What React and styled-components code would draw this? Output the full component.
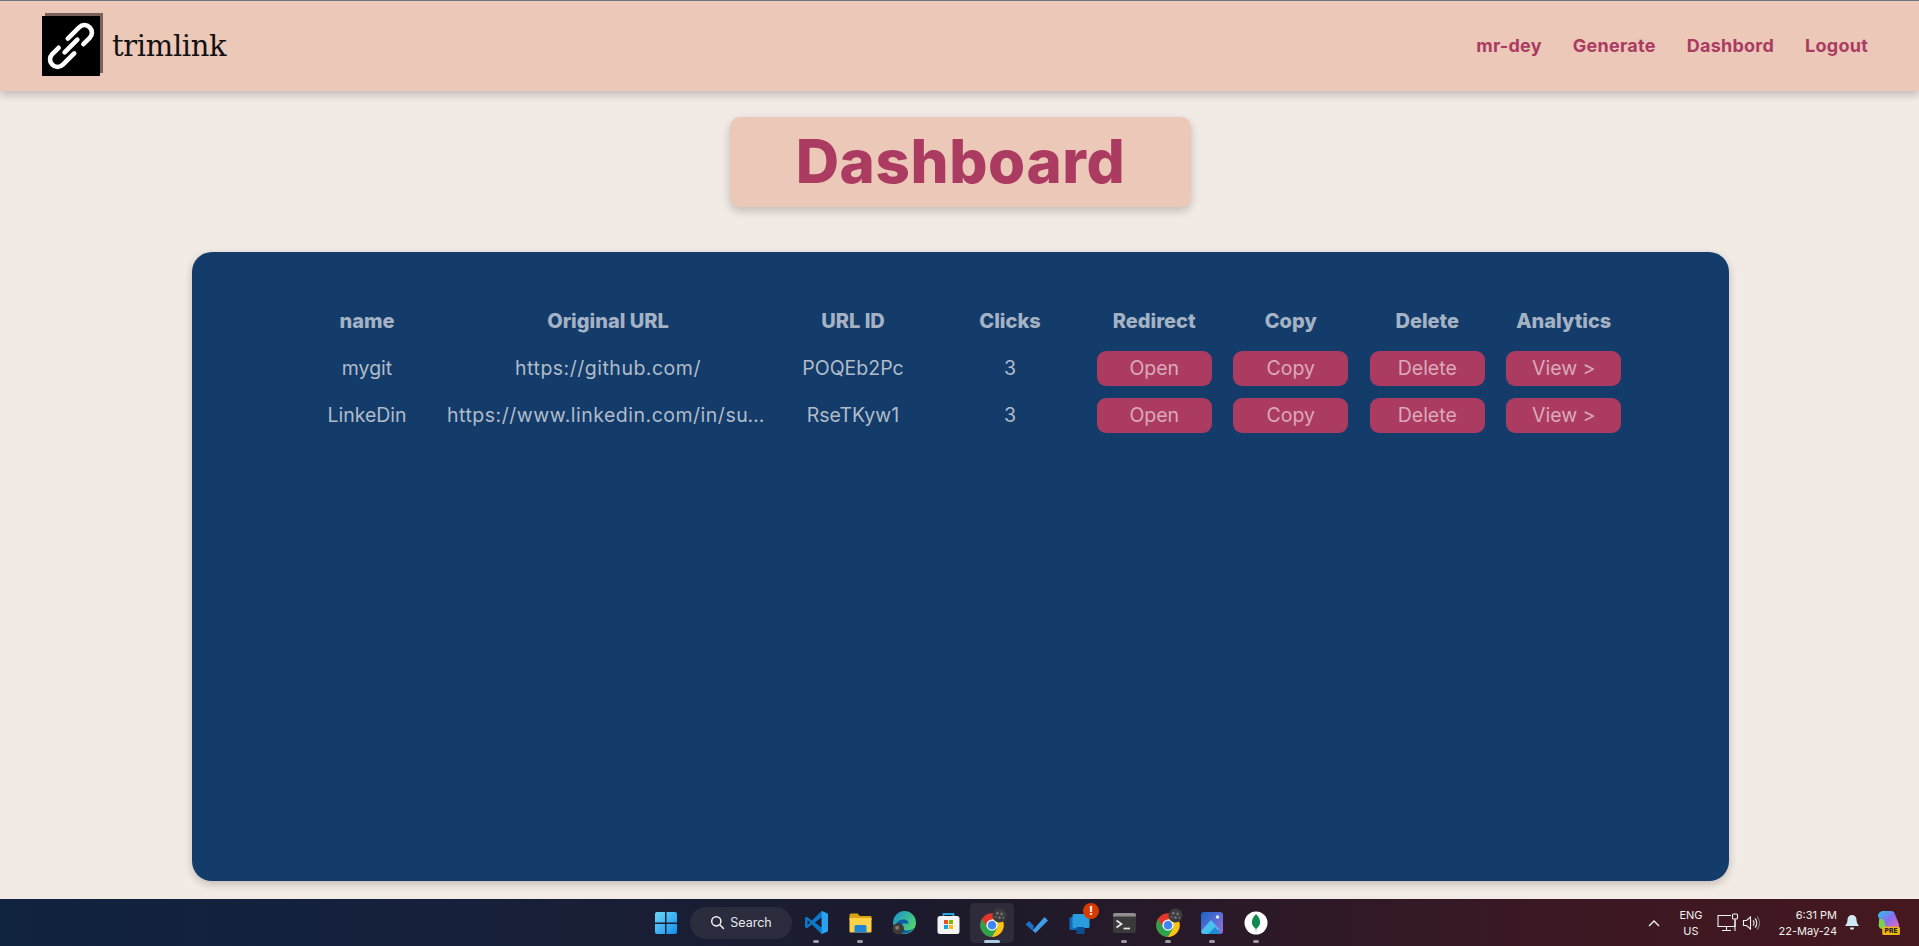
import styled, { createGlobalStyle } from 'styled-components'

const GlobalStyle = createGlobalStyle`
  html, body { margin: 0; padding: 0; height: 100%; overflow: hidden; }
  body { background: #f2eae4; font-family: Inter, "Open Sans", sans-serif; }
  #root { height: 100%; }
`

const Page = styled.div`
  height: 946px;
  display: flex;
  flex-direction: column;
`

const Header = styled.header`
  height: 90px;
  flex-shrink: 0;
  border-top: 1px solid #6b7280;
  background: #ecc8b9;
  box-shadow: 0 4px 8px rgba(0, 0, 0, 0.2);
  display: flex;
  align-items: center;
  justify-content: space-between;
  padding: 0 51px 0 42px;
`

const Brand = styled.div`
  display: flex;
  align-items: center;
  gap: 12px;
`

const LogoBox = styled.div`
  width: 58px;
  height: 60px;
  margin-top: -1px;
  background: #000;
  box-shadow: 3px -3px 0 #7a625a;
  display: flex;
  align-items: center;
  justify-content: center;
`

const BrandName = styled.span`
  font-family: "DejaVu Serif", "Liberation Serif", serif;
  font-size: 29px;
  letter-spacing: -0.35px;
  color: #111;
`

const Nav = styled.nav`
  display: flex;
  gap: 31px;
  margin-top: -2px;
`

const NavLink = styled.a`
  font-size: 18px;
  font-weight: 700;
  color: #ab3b61;
  letter-spacing: 0.25px;
`

const Main = styled.main`
  flex: 1;
  display: flex;
  flex-direction: column;
  align-items: center;
  padding: 26px 0 0 2px;
`

const TitleCard = styled.h1`
  margin: 0;
  width: 461px;
  height: 90px;
  background: #ecc8b9;
  border-radius: 10px;
  box-shadow: 0 4px 10px rgba(0, 0, 0, 0.2);
  display: flex;
  align-items: center;
  justify-content: center;
  font-size: 60px;
  font-weight: 800;
  letter-spacing: 0.6px;
  color: #ab3b61;
  padding-bottom: 3px;
  box-sizing: border-box;
`

const Panel = styled.section`
  width: 1537px;
  height: 629px;
  margin-top: 45px;
  box-sizing: border-box;
  background: #133c6b;
  border-radius: 20px;
  box-shadow: 0 3px 8px rgba(0, 0, 0, 0.2);
  padding: 45px 97px 0 98px;
`

const Row = styled.div`
  display: grid;
  grid-template-columns: 154px 328px 162px 152px repeat(4, 136.5px);
  height: 47px;
  align-items: center;
  justify-items: center;
  font-size: ${(p) => (p.$head ? '20px' : '19.5px')};
  font-weight: ${(p) => (p.$head ? 800 : 400)};
  color: ${(p) => (p.$head ? '#a5b2c4' : '#b1bbc9')};
`

const Cell = styled.div`
  width: 100%;
  box-sizing: border-box;
  padding: 0 ${(p) => (p.$wide ? '3px' : '7px')};
  text-align: center;
  white-space: nowrap;
  overflow: hidden;
  text-overflow: ellipsis;
  letter-spacing: ${(p) => (p.$wide ? '0.5px' : '0')};
`

const ActionButton = styled.button`
  width: 115px;
  height: 35px;
  margin-top: 1px;
  border: none;
  border-radius: 9px;
  background: #ab3b61;
  color: #dba9b9;
  font-family: inherit;
  font-size: 19.5px;
  padding: 0;
  cursor: pointer;
`

const Taskbar = styled.footer`
  height: 47px;
  flex-shrink: 0;
  background: linear-gradient(90deg, #10233f 0%, #17203a 25%, #1c1a2b 50%, #3a1824 80%, #45181f 100%);
  display: grid;
  grid-template-columns: 1fr auto 1fr;
  align-items: center;
  color: #fff;
`

const TaskCenter = styled.div`
  grid-column: 2;
  display: flex;
  align-items: center;
  margin-left: 3px;
`

const TaskIcon = styled.div`
  position: relative;
  width: 44px;
  height: 40px;
  display: flex;
  align-items: center;
  justify-content: center;
  border-radius: 5px;
  background: ${(p) => (p.$active ? 'rgba(255,255,255,0.08)' : 'transparent')};
  &::after {
    content: '';
    display: ${(p) => (p.$running ? 'block' : 'none')};
    position: absolute;
    bottom: 0;
    left: 50%;
    transform: translateX(-50%);
    width: ${(p) => (p.$active ? '16px' : '6px')};
    height: 3px;
    border-radius: 2px;
    background: ${(p) => (p.$active ? '#a9cfe0' : '#9a9aa2')};
  }
`

const SearchPill = styled.div`
  width: 102px;
  height: 32px;
  margin: 0 2px;
  border-radius: 16px;
  background: #2a2c3e;
  display: flex;
  align-items: center;
  justify-content: center;
  gap: 5px;
  font-size: 12.5px;
  color: #e8e8ec;
`

const Tray = styled.div`
  grid-column: 3;
  display: flex;
  align-items: center;
  justify-content: flex-end;
  padding-right: 18px;
  gap: 14px;
`

const TraySlot = styled.div`
  display: flex;
  align-items: center;
  gap: ${(p) => p.$gap || 0}px;
  margin-left: ${(p) => p.$ml || 0}px;
  margin-right: ${(p) => p.$mr || 0}px;
`

const TrayText = styled.div`
  font-size: 11px;
  line-height: 16px;
  text-align: ${(p) => p.$align || 'center'};
  color: #f2f0f0;
`

const Badge = styled.span`
  position: absolute;
  top: 0;
  right: 3px;
  width: 16px;
  height: 16px;
  border-radius: 50%;
  background: #d83b01;
  color: #fff;
  font-size: 12px;
  font-weight: 700;
  display: flex;
  align-items: center;
  justify-content: center;
`

// two hooks and a centre bar, drawn along a diagonal
const LinkIcon = () => (
  <svg width="58" height="60" viewBox="-29 -30 58 60" fill="none" stroke="#fff" strokeWidth="4.600" strokeLinecap="round">
    <g transform="rotate(-45)">
      <path d="M3 -7.500H19A7.500 7.500 0 0 1 19 7.500H10" />
      <path d="M-3 7.500H-19A7.500 7.500 0 0 1 -19 -7.500H-10" />
      <path d="M-9 0H9" />
    </g>
  </svg>
)

const WindowsIcon = () => (
  <svg width="24" height="24" viewBox="0 0 24 24">
    <defs>
      <linearGradient id="win" x1="0" y1="0" x2="1" y2="1">
        <stop offset="0" stopColor="#6fd6f7" />
        <stop offset="1" stopColor="#0f8fee" />
      </linearGradient>
    </defs>
    <path fill="url(#win)" d="M1 3a2 2 0 0 1 2-2h8v10.500H1zM12.500 1H21a2 2 0 0 1 2 2v8.500H12.500zM1 13h10v10H3a2 2 0 0 1-2-2zM12.500 13H23v8a2 2 0 0 1-2 2h-8.500z" />
  </svg>
)

const SearchIcon = () => (
  <svg width="15" height="15" viewBox="0 0 15 15" fill="none" stroke="#f2f2f2" strokeWidth="1.5" strokeLinecap="round">
    <circle cx="6.300" cy="6.300" r="4.600" />
    <path d="M9.800 9.800 13.500 13.500" />
  </svg>
)

const VSCodeIcon = () => (
  <svg width="25" height="25" viewBox="0 0 24 24">
    <path fill="#0e78c8" d="M17 1 7.500 10 3 6.500 1 7.500v9l2 1L7.500 14l9.500 9 6-2.500v-17zM3.500 9.500 6 12l-2.500 2.500zM17 7v10l-6.500-5z" />
    <path fill="#2aa2ee" d="M17 1l6 2.500v17L17 23z" />
  </svg>
)

const FolderIcon = () => (
  <svg width="25" height="24" viewBox="0 0 24 24">
    <path fill="#dba40f" d="M1 4a1.500 1.500 0 0 1 1.500-1.500H9L11.500 5H22a1 1 0 0 1 1 1v3H1z" />
    <path fill="#fdd14a" d="M1 7h22v13.500a1 1 0 0 1-1 1H2a1 1 0 0 1-1-1z" />
    <path fill="#1f86d6" d="M6 15.500A1.500 1.500 0 0 1 7.500 14h9a1.500 1.500 0 0 1 1.500 1.500v6H6z" />
  </svg>
)

const EdgeIcon = () => (
  <svg width="25" height="25" viewBox="0 0 24 24">
    <defs>
      <linearGradient id="edge" x1="0" y1="0" x2="1" y2="0.700">
        <stop offset="0" stopColor="#1a8fd6" />
        <stop offset="1" stopColor="#52d86a" />
      </linearGradient>
    </defs>
    <circle cx="12" cy="12" r="11" fill="url(#edge)" />
    <path fill="#0b5ea8" d="M3 17c0-5 4-8 8-8 3 0 5 2 5 4h-5c-1.500 0-2.500 1.500-2 3.500.6 2 3.500 3.500 7 3 2-.3 3.500-1 5-2.500-2 3-5 5.500-9 5.500-4.500 0-9-2-9-5.500z" />
    <circle cx="6" cy="18" r="5.500" fill="#3b3a38" />
    <circle cx="5" cy="17" r="2" fill="#8a7a66" />
  </svg>
)

const StoreIcon = () => (
  <svg width="25" height="24" viewBox="0 0 24 24">
    <path fill="none" stroke="#2aa6e6" strokeWidth="1.800" d="M7 6V3h10v3" />
    <rect x="1" y="5" width="22" height="18" rx="2.500" fill="#f4f4f4" />
    <rect x="7.500" y="9" width="4" height="4" fill="#ea4e24" />
    <rect x="12.500" y="9" width="4" height="4" fill="#7fba00" />
    <rect x="7.500" y="14" width="4" height="4" fill="#0ea5ea" />
    <rect x="12.500" y="14" width="4" height="4" fill="#fdb900" />
  </svg>
)

const ChromeIcon = () => (
  <svg width="30" height="30" viewBox="-2 0 28 28">
    <g transform="translate(0 4)">
      <circle cx="12" cy="12" r="11" fill="#e2382c" />
      <path fill="#f9c513" d="M12 23a11 11 0 0 0 9.500-16.500H12z" />
      <path fill="#2ba24c" d="M2.500 6.500A11 11 0 0 0 12 23l5-8.500H8z" />
      <circle cx="12" cy="12" r="5.200" fill="#fff" />
      <circle cx="12" cy="12" r="4" fill="#3f86f2" />
    </g>
    <circle cx="19" cy="7" r="6.500" fill="#3b3b3e" />
    <circle cx="17" cy="5" r="1.200" fill="#77777b" />
    <circle cx="21" cy="5.500" r="1.200" fill="#77777b" />
    <circle cx="19" cy="9" r="1.200" fill="#77777b" />
    <circle cx="15.500" cy="8.500" r="1" fill="#66666a" />
    <circle cx="22.500" cy="9" r="1" fill="#66666a" />
  </svg>
)

const TodoIcon = () => (
  <svg width="25" height="24" viewBox="0 0 24 24">
    <path fill="#1d6ec4" d="M1 13.500 4.500 10 9.500 15 8 19.500z" />
    <path fill="#3f9ce8" d="M8 19.500 20 6l3.500 3.500L11 22z" />
  </svg>
)

const RemoteIcon = () => (
  <svg width="25" height="24" viewBox="0 0 24 24">
    <rect x="1" y="6" width="15" height="13" rx="1.500" fill="#0f6cbd" />
    <rect x="4" y="3" width="17" height="14" rx="1.500" fill="#2b9be0" />
    <rect x="8" y="16" width="8" height="7" rx="1" fill="#0a4f94" />
  </svg>
)

const TerminalIcon = () => (
  <svg width="25" height="22" viewBox="0 0 24 22">
    <rect x="0.500" y="1" width="23" height="20" rx="2" fill="#3a3a3a" />
    <path d="M0.500 3a2 2 0 0 1 2-2h19a2 2 0 0 1 2 2v1.500H0.500z" fill="#8f8f8f" />
    <path d="M4 8.500 9 12l-5 3.500" fill="none" stroke="#e6e6e6" strokeWidth="1.700" />
    <path d="M11 16.500h6.500" stroke="#e6e6e6" strokeWidth="1.700" />
  </svg>
)

const PhotosIcon = () => (
  <svg width="24" height="24" viewBox="0 0 24 24">
    <defs>
      <linearGradient id="photos" x1="0" y1="0" x2="1" y2="1">
        <stop offset="0" stopColor="#1766c9" />
        <stop offset="1" stopColor="#9b6fd8" />
      </linearGradient>
    </defs>
    <rect x="1" y="1" width="22" height="22" rx="3" fill="url(#photos)" />
    <circle cx="17.500" cy="6" r="1.800" fill="#d6ecff" />
    <path fill="#49c1ee" d="M1 20 11 9l8 9-3 5H4a3 3 0 0 1-3-3z" />
    <path fill="#1c8fd4" d="M8 23l7-7 6 7z" />
  </svg>
)

const MongoIcon = () => (
  <svg width="24" height="24" viewBox="0 0 24 24">
    <circle cx="12" cy="12" r="11.500" fill="#fff" />
    <path fill="#0f8a4f" d="M12 3c3.500 3.500 4.500 6.500 4 9.500-.4 2.500-2.500 4-3.500 5L12 21l-.5-3.500c-1-1-3.100-2.500-3.500-5C7.500 9.500 8.500 6.500 12 3z" />
  </svg>
)

const NetworkIcon = () => (
  <svg width="24" height="20" viewBox="0 0 24 20" fill="none" stroke="#f2f2f2" strokeWidth="1.100">
    <path d="M15 2.500H2v11h17V7" />
    <path d="M10.500 13.500v4M6 17.500h9" />
    <rect x="16.500" y="1" width="5" height="5" rx="1" />
    <path d="M19 6v12" />
  </svg>
)

const VolumeIcon = () => (
  <svg width="18" height="16" viewBox="0 0 18 16" fill="none" stroke="#f2f2f2" strokeWidth="1.100">
    <path d="M1.500 5.500h3L8.500 2v12l-4-3.500h-3z" />
    <path d="M11 5.500a3.500 3.500 0 0 1 0 5M13 3.500a6.500 6.500 0 0 1 0 9" />
    <path d="M15 1.500a9.500 9.500 0 0 1 0 13" stroke="#777" />
  </svg>
)

const BellIcon = () => (
  <svg width="16" height="17" viewBox="0 0 16 17" fill="#cfe9f2">
    <path d="M8 1a4.500 4.500 0 0 1 4.500 4.500c0 3.500 1.500 5 2.500 6.500H1c1-1.500 2.500-3 2.500-6.500A4.500 4.500 0 0 1 8 1z" />
    <path d="M5.800 13.500h4.400a2.200 2.200 0 0 1-4.400 0z" />
  </svg>
)

const CopilotIcon = () => (
  <svg width="25" height="25" viewBox="0 0 24 24">
    <defs>
      <linearGradient id="copilot" x1="0" y1="0" x2="1" y2="1">
        <stop offset="0" stopColor="#2cc4e8" />
        <stop offset="0.500" stopColor="#8a6cf0" />
        <stop offset="1" stopColor="#f06ab0" />
      </linearGradient>
    </defs>
    <path fill="url(#copilot)" d="M7 1h8c1.500 0 2.500 1 3 2.500l4 10c.7 2-.5 4.500-3 4.500H9c-1.500 0-2.500-1-3-2.500L2 6C1.500 3.500 4 1 7 1z" />
    <path fill="#7bd04e" d="M3 9c2-1 4-.5 5 2l2 7H6c-2 0-3-1-3.500-3z" />
    <rect x="6" y="16" width="17" height="8" rx="1.500" fill="#f2b90f" />
    <text x="14.500" y="22.500" fontSize="6.500" fontWeight="800" fontFamily="Inter, sans-serif" textAnchor="middle" fill="#222">PRE</text>
  </svg>
)

const ChevronUp = () => (
  <svg width="12" height="8" viewBox="0 0 12 8" fill="none" stroke="#f2f2f2" strokeWidth="1.400">
    <path d="M1 7l5-5 5 5" />
  </svg>
)

const columns = ['name', 'Original URL', 'URL ID', 'Clicks', 'Redirect', 'Copy', 'Delete', 'Analytics']

const links = [
  { name: 'mygit', url: 'https://github.com/', id: 'POQEb2Pc', clicks: 3 },
  { name: 'LinkeDin', url: 'https://www.linkedin.com/in/su-dey', id: 'RseTKyw1', clicks: 3 },
]

export default function App() {
  return (
    <Page>
      <GlobalStyle />
      <Header>
        <Brand>
          <LogoBox><LinkIcon /></LogoBox>
          <BrandName>trimlink</BrandName>
        </Brand>
        <Nav>
          <NavLink>mr-dey</NavLink>
          <NavLink>Generate</NavLink>
          <NavLink>Dashbord</NavLink>
          <NavLink>Logout</NavLink>
        </Nav>
      </Header>
      <Main>
        <TitleCard>Dashboard</TitleCard>
        <Panel>
          <Row $head>
            {columns.map((c) => <Cell key={c}>{c}</Cell>)}
          </Row>
          {links.map((l) => (
            <Row key={l.id}>
              <Cell>{l.name}</Cell>
              <Cell $wide>{l.url}</Cell>
              <Cell>{l.id}</Cell>
              <Cell>{l.clicks}</Cell>
              <ActionButton>Open</ActionButton>
              <ActionButton>Copy</ActionButton>
              <ActionButton>Delete</ActionButton>
              <ActionButton>View &gt;</ActionButton>
            </Row>
          ))}
        </Panel>
      </Main>
      <Taskbar>
        <TaskCenter>
          <TaskIcon><WindowsIcon /></TaskIcon>
          <SearchPill><SearchIcon />Search</SearchPill>
          <TaskIcon $running><VSCodeIcon /></TaskIcon>
          <TaskIcon $running><FolderIcon /></TaskIcon>
          <TaskIcon><EdgeIcon /></TaskIcon>
          <TaskIcon><StoreIcon /></TaskIcon>
          <TaskIcon $running $active><ChromeIcon /></TaskIcon>
          <TaskIcon><TodoIcon /></TaskIcon>
          <TaskIcon><RemoteIcon /><Badge>!</Badge></TaskIcon>
          <TaskIcon $running><TerminalIcon /></TaskIcon>
          <TaskIcon $running><ChromeIcon /></TaskIcon>
          <TaskIcon $running><PhotosIcon /></TaskIcon>
          <TaskIcon $running><MongoIcon /></TaskIcon>
        </TaskCenter>
        <Tray>
          <TraySlot $mr={5}><ChevronUp /></TraySlot>
          <TrayText>ENG<br />US</TrayText>
          <TraySlot $gap={2} $mr={4}><NetworkIcon /><VolumeIcon /></TraySlot>
          <TrayText $align="right">6:31 PM<br />22-May-24</TrayText>
          <TraySlot $ml={-7} $mr={2}><BellIcon /></TraySlot>
          <CopilotIcon />
        </Tray>
      </Taskbar>
    </Page>
  )
}
